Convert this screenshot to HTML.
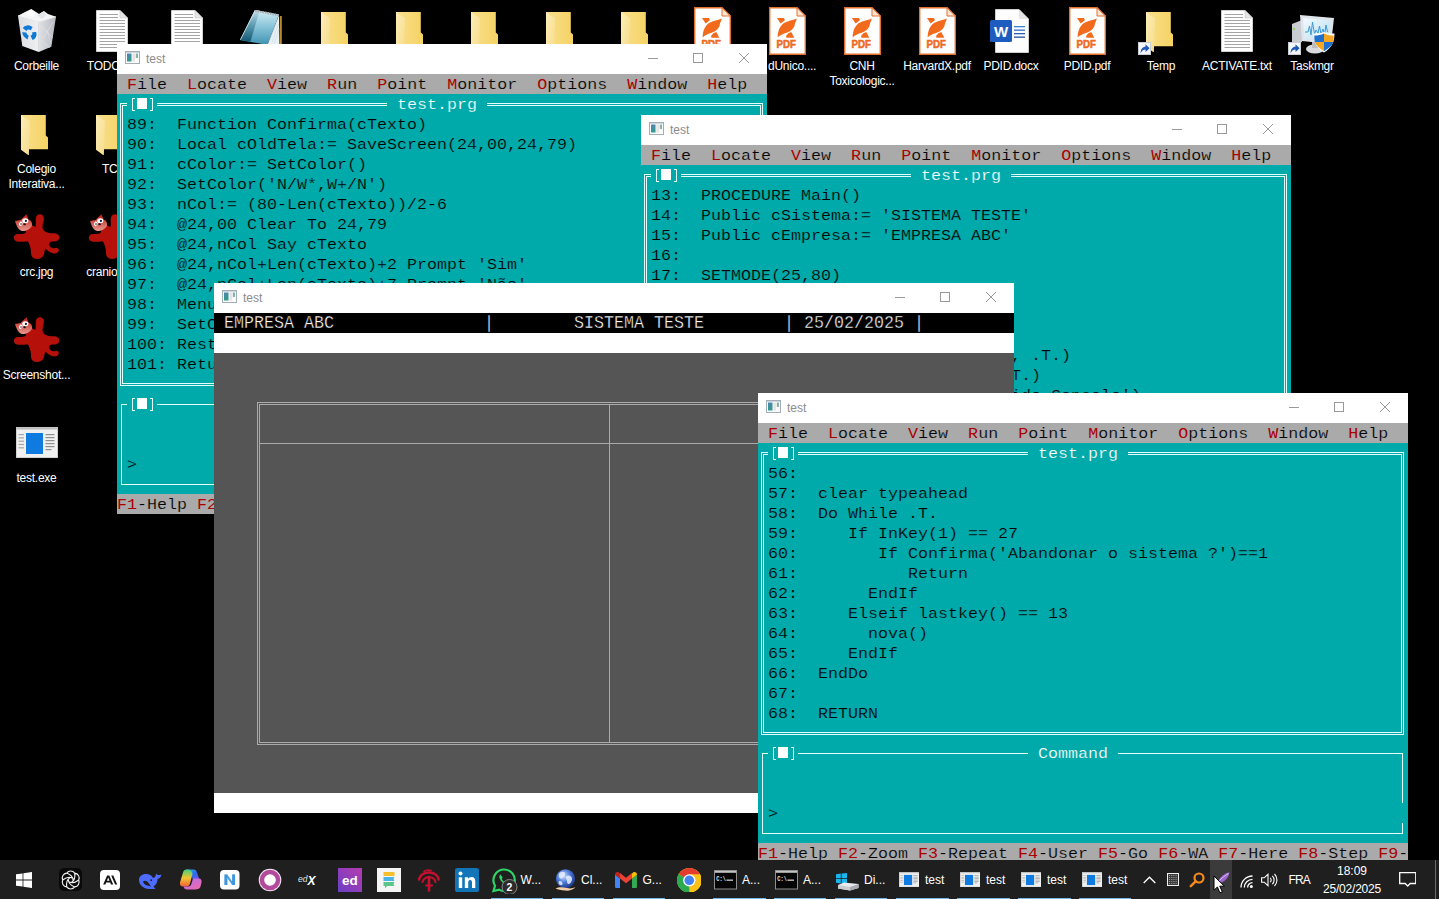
<!DOCTYPE html><html><head><meta charset="utf-8"><title>desktop</title><style>

*{box-sizing:border-box}
html,body{margin:0;padding:0}
body{width:1439px;height:899px;background:#000;position:relative;overflow:hidden;font-family:"Liberation Sans",sans-serif}
.win{position:absolute;background:#fff;overflow:hidden}
.tb{position:absolute;left:0;top:0;right:0;height:30px;background:#fff}
.tb .ti{position:absolute;left:29px;top:8px;font-size:12px;line-height:14px;color:#8c8c8c}
.tb svg.ic{position:absolute;left:8px;top:7px}
.tb svg.cb{position:absolute;top:0;right:0}
.con{position:absolute;left:0;top:30px;right:0;bottom:0;background:#00aaaa;overflow:hidden}
.r{position:absolute;left:0;height:20px;line-height:20px;white-space:pre;font-family:"Liberation Mono",monospace;font-size:15.5px;color:#000;transform:scaleX(1.07527);transform-origin:0 0;width:605px;padding-top:1px}
.r{-webkit-text-stroke:.22px #00aaaa}
.r.g{-webkit-text-stroke-color:#aaaaaa}
.r i{font-style:normal;color:#aa0000;-webkit-text-stroke:0}
.r.w{color:#fff}
.g{background:#aaaaaa}
.l{position:absolute;background:#e4ffff}
.c3 .r{-webkit-text-stroke:.4px #000;font-size:19px;transform:scaleX(.877);width:914px;color:#fff;padding-top:0}
.c3 .l{background:#aaaaaa}
.lb{position:absolute;text-align:center;color:#fff;font-size:12px;line-height:15px;letter-spacing:-.25px;white-space:nowrap;text-shadow:0 1px 1px #000}
.tl{position:absolute;top:13px;color:#fff;font-size:12px;line-height:14px;white-space:nowrap}
.ck{position:absolute;width:80px;text-align:center;color:#fff;font-size:12px;line-height:14px;white-space:nowrap}

</style></head><body>
<svg width="0" height="0" style="position:absolute"><defs>
<linearGradient id="gF" x1="0" y1="0" x2="1" y2="0"><stop offset="0" stop-color="#f9e08e"/><stop offset="1" stop-color="#f5d263"/></linearGradient>
<linearGradient id="gFl" x1="0" y1="0" x2="1" y2="1"><stop offset="0" stop-color="#fdeeb5"/><stop offset="1" stop-color="#f6dc8c"/></linearGradient>
<linearGradient id="gBin" x1="0" y1="0" x2="1" y2="0"><stop offset="0" stop-color="#dcdee2"/><stop offset="1" stop-color="#eff0f2"/></linearGradient>
<linearGradient id="gNp" x1="0" y1="0" x2="0" y2="1"><stop offset="0" stop-color="#d6edf5"/><stop offset=".45" stop-color="#8cc6da"/><stop offset="1" stop-color="#3f93b2"/></linearGradient>
<linearGradient id="gNp2" x1="0" y1="0" x2="0" y2="1"><stop offset="0" stop-color="#c4e0ea"/><stop offset=".4" stop-color="#6aa6bc"/><stop offset="1" stop-color="#135873"/></linearGradient>
<linearGradient id="gBin2" x1="0" y1="0" x2="1" y2="0"><stop offset="0" stop-color="#dfe1e5"/><stop offset="1" stop-color="#b4b8be"/></linearGradient>
<linearGradient id="gEd" x1="0" y1="1" x2="1" y2="0"><stop offset="0" stop-color="#6b3fc4"/><stop offset="1" stop-color="#b63bb0"/></linearGradient>
<linearGradient id="gCp1" x1="0" y1="0" x2="1" y2="1"><stop offset="0" stop-color="#2fb8e8"/><stop offset=".5" stop-color="#2a6df0"/><stop offset="1" stop-color="#7a4ff0"/></linearGradient>
<linearGradient id="gCp2" x1="0" y1="0" x2="0" y2="1"><stop offset="0" stop-color="#3fd07a"/><stop offset=".5" stop-color="#f3c530"/><stop offset="1" stop-color="#f0603a"/></linearGradient>
<linearGradient id="gCp3" x1="0" y1="0" x2="1" y2="1"><stop offset="0" stop-color="#b36cf0"/><stop offset="1" stop-color="#f06aa8"/></linearGradient>
<radialGradient id="gGl" cx=".4" cy=".35" r=".7"><stop offset="0" stop-color="#cfe0ff"/><stop offset=".5" stop-color="#4a78d8"/><stop offset="1" stop-color="#16307e"/></radialGradient>
<linearGradient id="gHead" x1="0" y1="0" x2="0" y2="1"><stop offset="0" stop-color="#c01810"/><stop offset="1" stop-color="#e89a90"/></linearGradient>
<linearGradient id="gAi" x1="0" y1="0" x2="0" y2="1"><stop offset="0" stop-color="#4f86b0"/><stop offset="1" stop-color="#2e9c8a"/></linearGradient>
<linearGradient id="gMon" x1="0" y1="0" x2="1" y2="1"><stop offset="0" stop-color="#f4fbff"/><stop offset="1" stop-color="#b8dcf0"/></linearGradient>
</defs></svg><svg style="position:absolute;left:17px;top:8px" width="40" height="45" viewBox="0 0 40 45" ><path d="M1 7.700L21.700 14V44L5.300 38z" fill="url(#gBin)"/><path d="M21.700 14L39 8.700L34.300 38.700L21.700 44z" fill="url(#gBin2)"/><path d="M1 7.700L8 4L14.300 1L19 4L22 6L27 3L31 6L39 8.700L21.700 14z" fill="#f4f5f7"/><path d="M9 6L14.300 1.500L18 5L16 9z" fill="#ffffff"/><path d="M20 7.500L26.500 3.200L29.500 7L25 11z" fill="#e4e6ea"/><path d="M1 7.700L21.700 14L39 8.700" fill="none" stroke="#ffffff" stroke-width=".8" opacity=".9"/><path d="M21.700 14V44" stroke="#f6f7f8" stroke-width=".7"/><path d="M24 18L36 30M36 14L26 30M30 22L34 36M24 32L33 40" stroke="#e9ebee" stroke-width=".7" opacity=".7"/><g transform="translate(12.300 24.700) skewY(12)" fill="none" stroke="#0f7ad6" stroke-width="4.200"><path d="M-4.700 -2.200A5.500 5.500 0 0 1 2.400 -4.600"/><path d="M4.900 -1.700A5.500 5.500 0 0 1 2.200 4.700"/><path d="M-1.200 5.100A5.500 5.500 0 0 1 -5.100 .800"/></g></svg><div class="lb" style="left:-8.5px;top:59px;width:90px">Corbeille</div><svg style="position:absolute;left:96px;top:10px" width="32" height="42" viewBox="0 0 32 42" ><path d="M0.5 0.5H24L31.5 8V41.5H0.5z" fill="#fff" stroke="#d0d0d0"/><path d="M24 0.5V8H31.5z" fill="#e6e6e6" stroke="#c8c8c8" stroke-width=".6"/><rect x="3.5" y="4" width="18.5" height="1" fill="#a4a4a4"/><rect x="3.5" y="7" width="18.5" height="1" fill="#a4a4a4"/><rect x="3.5" y="10" width="25.5" height="1" fill="#a4a4a4"/><rect x="3.5" y="13" width="25.5" height="1" fill="#a4a4a4"/><rect x="3.5" y="16" width="25.5" height="1" fill="#a4a4a4"/><rect x="3.5" y="19" width="25.5" height="1" fill="#a4a4a4"/><rect x="3.5" y="22" width="25.5" height="1" fill="#a4a4a4"/><rect x="3.5" y="25" width="25.5" height="1" fill="#a4a4a4"/><rect x="3.5" y="28" width="25.5" height="1" fill="#a4a4a4"/><rect x="3.5" y="31" width="25.5" height="1" fill="#a4a4a4"/><rect x="3.5" y="34" width="25.5" height="1" fill="#a4a4a4"/><rect x="3.5" y="37" width="25.5" height="1" fill="#a4a4a4"/></svg><div class="lb" style="left:66.0px;top:59px;width:90px">TODO.txt</div><svg style="position:absolute;left:171px;top:10px" width="32" height="42" viewBox="0 0 32 42" ><path d="M0.5 0.5H24L31.5 8V41.5H0.5z" fill="#fff" stroke="#d0d0d0"/><path d="M24 0.5V8H31.5z" fill="#e6e6e6" stroke="#c8c8c8" stroke-width=".6"/><rect x="3.5" y="4" width="18.5" height="1" fill="#a4a4a4"/><rect x="3.5" y="7" width="18.5" height="1" fill="#a4a4a4"/><rect x="3.5" y="10" width="25.5" height="1" fill="#a4a4a4"/><rect x="3.5" y="13" width="25.5" height="1" fill="#a4a4a4"/><rect x="3.5" y="16" width="25.5" height="1" fill="#a4a4a4"/><rect x="3.5" y="19" width="25.5" height="1" fill="#a4a4a4"/><rect x="3.5" y="22" width="25.5" height="1" fill="#a4a4a4"/><rect x="3.5" y="25" width="25.5" height="1" fill="#a4a4a4"/><rect x="3.5" y="28" width="25.5" height="1" fill="#a4a4a4"/><rect x="3.5" y="31" width="25.5" height="1" fill="#a4a4a4"/><rect x="3.5" y="34" width="25.5" height="1" fill="#a4a4a4"/><rect x="3.5" y="37" width="25.5" height="1" fill="#a4a4a4"/></svg><svg style="position:absolute;left:239px;top:10px" width="44" height="36" viewBox="0 0 44 36" ><path d="M16 0L40 4.500L28.500 35L1 30z" fill="url(#gNp)"/><path d="M16 0L20.500 .800L11.500 31.500L1 30z" fill="url(#gNp2)"/><path d="M16.300 .300L1.400 29.800" stroke="#e8f4f8" stroke-width=".9" opacity=".8"/><path d="M40 5L40.500 36H28L28.500 35z" fill="#e9f1f5"/><path d="M38.500 10L31 30M39.500 14L33 32M40 19L35 34" stroke="#c8d6de" stroke-width=".6"/><path d="M16.200 .800L40 5.300" stroke="#a9aeb2" stroke-width="2.200" stroke-dasharray="1.600 .900"/><path d="M40.800 6H42.800V36H40.800z" fill="#b98a2e"/></svg><svg style="position:absolute;left:321px;top:12px" width="27" height="40" viewBox="0 0 27 40" ><path d="M0 0H24.8V20.500L27 22.500V34.200H0z" fill="url(#gF)"/><path d="M0 0L9 6.200L7.800 40.500L0 34.800z" fill="url(#gFl)"/></svg><svg style="position:absolute;left:396px;top:12px" width="27" height="40" viewBox="0 0 27 40" ><path d="M0 0H24.8V20.500L27 22.500V34.200H0z" fill="url(#gF)"/><path d="M0 0L9 6.200L7.800 40.500L0 34.800z" fill="url(#gFl)"/></svg><svg style="position:absolute;left:471px;top:12px" width="27" height="40" viewBox="0 0 27 40" ><path d="M0 0H24.8V20.500L27 22.500V34.200H0z" fill="url(#gF)"/><path d="M0 0L9 6.200L7.800 40.500L0 34.800z" fill="url(#gFl)"/></svg><svg style="position:absolute;left:546px;top:12px" width="27" height="40" viewBox="0 0 27 40" ><path d="M0 0H24.8V20.500L27 22.500V34.200H0z" fill="url(#gF)"/><path d="M0 0L9 6.200L7.800 40.500L0 34.800z" fill="url(#gFl)"/></svg><svg style="position:absolute;left:621px;top:12px" width="27" height="40" viewBox="0 0 27 40" ><path d="M0 0H24.8V20.500L27 22.500V34.200H0z" fill="url(#gF)"/><path d="M0 0L9 6.200L7.800 40.500L0 34.800z" fill="url(#gFl)"/></svg><svg style="position:absolute;left:694px;top:7px" width="37" height="48" viewBox="0 0 37 48" ><path d="M.700 .700H28L36.300 9V47.300H.700z" fill="#fff" stroke="#e2702c" stroke-width="1.400"/><path d="M28 .700V9H36.300z" fill="#fbe6d6" stroke="#e2702c" stroke-width="1"/><path d="M8.700 30.500C8.700 24 11 18 16 15.500C20 13.500 25 13 27.700 11.500C27.500 14 26 15.500 25.800 17.500C25.500 21 22 24.500 17 26C13.500 27 10.500 28.500 8.700 30.500z" fill="#f26a1b"/><path d="M8 11.100H15L15.900 13.300L11.600 16.600z" fill="#f26a1b"/><path d="M19.300 26.300L22.300 25L25.300 30.800H17.600L17 29z" fill="#f26a1b"/><text x="7.600" y="40.800" font-family="Liberation Sans,sans-serif" font-weight="700" font-size="10.600" fill="#ee6a1f" stroke="#ee6a1f" stroke-width=".55" textLength="19.400" lengthAdjust="spacingAndGlyphs">PDF</text></svg><svg style="position:absolute;left:769px;top:7px" width="37" height="48" viewBox="0 0 37 48" ><path d="M.700 .700H28L36.300 9V47.300H.700z" fill="#fff" stroke="#e2702c" stroke-width="1.400"/><path d="M28 .700V9H36.300z" fill="#fbe6d6" stroke="#e2702c" stroke-width="1"/><path d="M8.700 30.500C8.700 24 11 18 16 15.500C20 13.500 25 13 27.700 11.500C27.500 14 26 15.500 25.800 17.500C25.500 21 22 24.500 17 26C13.500 27 10.500 28.500 8.700 30.500z" fill="#f26a1b"/><path d="M8 11.100H15L15.900 13.300L11.600 16.600z" fill="#f26a1b"/><path d="M19.300 26.300L22.300 25L25.300 30.800H17.600L17 29z" fill="#f26a1b"/><text x="7.600" y="40.800" font-family="Liberation Sans,sans-serif" font-weight="700" font-size="10.600" fill="#ee6a1f" stroke="#ee6a1f" stroke-width=".55" textLength="19.400" lengthAdjust="spacingAndGlyphs">PDF</text></svg><svg style="position:absolute;left:844px;top:7px" width="37" height="48" viewBox="0 0 37 48" ><path d="M.700 .700H28L36.300 9V47.300H.700z" fill="#fff" stroke="#e2702c" stroke-width="1.400"/><path d="M28 .700V9H36.300z" fill="#fbe6d6" stroke="#e2702c" stroke-width="1"/><path d="M8.700 30.500C8.700 24 11 18 16 15.500C20 13.500 25 13 27.700 11.500C27.500 14 26 15.500 25.800 17.500C25.500 21 22 24.500 17 26C13.500 27 10.500 28.500 8.700 30.500z" fill="#f26a1b"/><path d="M8 11.100H15L15.900 13.300L11.600 16.600z" fill="#f26a1b"/><path d="M19.300 26.300L22.300 25L25.300 30.800H17.600L17 29z" fill="#f26a1b"/><text x="7.600" y="40.800" font-family="Liberation Sans,sans-serif" font-weight="700" font-size="10.600" fill="#ee6a1f" stroke="#ee6a1f" stroke-width=".55" textLength="19.400" lengthAdjust="spacingAndGlyphs">PDF</text></svg><svg style="position:absolute;left:919px;top:7px" width="37" height="48" viewBox="0 0 37 48" ><path d="M.700 .700H28L36.300 9V47.300H.700z" fill="#fff" stroke="#e2702c" stroke-width="1.400"/><path d="M28 .700V9H36.300z" fill="#fbe6d6" stroke="#e2702c" stroke-width="1"/><path d="M8.700 30.500C8.700 24 11 18 16 15.500C20 13.500 25 13 27.700 11.500C27.500 14 26 15.500 25.800 17.500C25.500 21 22 24.500 17 26C13.500 27 10.500 28.500 8.700 30.500z" fill="#f26a1b"/><path d="M8 11.100H15L15.900 13.300L11.600 16.600z" fill="#f26a1b"/><path d="M19.300 26.300L22.300 25L25.300 30.800H17.600L17 29z" fill="#f26a1b"/><text x="7.600" y="40.800" font-family="Liberation Sans,sans-serif" font-weight="700" font-size="10.600" fill="#ee6a1f" stroke="#ee6a1f" stroke-width=".55" textLength="19.400" lengthAdjust="spacingAndGlyphs">PDF</text></svg><svg style="position:absolute;left:1069px;top:7px" width="37" height="48" viewBox="0 0 37 48" ><path d="M.700 .700H28L36.300 9V47.300H.700z" fill="#fff" stroke="#e2702c" stroke-width="1.400"/><path d="M28 .700V9H36.300z" fill="#fbe6d6" stroke="#e2702c" stroke-width="1"/><path d="M8.700 30.500C8.700 24 11 18 16 15.500C20 13.500 25 13 27.700 11.500C27.500 14 26 15.500 25.800 17.500C25.500 21 22 24.500 17 26C13.500 27 10.500 28.500 8.700 30.500z" fill="#f26a1b"/><path d="M8 11.100H15L15.900 13.300L11.600 16.600z" fill="#f26a1b"/><path d="M19.300 26.300L22.300 25L25.300 30.800H17.600L17 29z" fill="#f26a1b"/><text x="7.600" y="40.800" font-family="Liberation Sans,sans-serif" font-weight="700" font-size="10.600" fill="#ee6a1f" stroke="#ee6a1f" stroke-width=".55" textLength="19.400" lengthAdjust="spacingAndGlyphs">PDF</text></svg><div class="lb" style="left:768px;top:59px;text-align:left">dUnico....</div><div class="lb" style="left:817.0px;top:59px;width:90px">CNH<br>Toxicologic...</div><div class="lb" style="left:892.0px;top:59px;width:90px">HarvardX.pdf</div><svg style="position:absolute;left:990px;top:9px" width="39" height="44" viewBox="0 0 39 44" ><path d="M5.500 0.5H29L38.500 10V43.500H5.500z" fill="#fdfdfd" stroke="#cfcfcf"/><path d="M29 .5V10H38.500z" fill="#e4e4e4"/><rect x="0" y="11" width="22" height="22" rx="1.500" fill="#1e5cc0"/><text x="11" y="28" font-family="Liberation Sans,sans-serif" font-weight="700" font-size="15" fill="#fff" text-anchor="middle">W</text><rect x="24" y="17" width="11" height="1.300" fill="#3c86d8"/><rect x="24" y="20.500" width="11" height="1.300" fill="#2f6fc8"/><rect x="24" y="24" width="11" height="1.300" fill="#2a5fb4"/><rect x="24" y="27.500" width="11" height="1.300" fill="#24509c"/></svg><div class="lb" style="left:966.0px;top:59px;width:90px">PDID.docx</div><div class="lb" style="left:1042.0px;top:59px;width:90px">PDID.pdf</div><svg style="position:absolute;left:1146px;top:12px" width="27" height="40" viewBox="0 0 27 40" ><path d="M0 0H24.8V20.500L27 22.500V34.200H0z" fill="url(#gF)"/><path d="M0 0L9 6.200L7.800 40.500L0 34.800z" fill="url(#gFl)"/></svg><svg style="position:absolute;left:1138px;top:42px" width="13" height="13" viewBox="0 0 13 13" ><rect x=".5" y=".5" width="12" height="12" fill="#f4f6fa" stroke="#c9ced6"/><path d="M2.600 11.500C2.600 7 4.600 4.800 7.500 4.800V2.300L11.600 6.200L7.500 10V7.600C5.500 7.600 4 8.600 2.600 11.500z" fill="#1f58b8"/></svg><div class="lb" style="left:1116.0px;top:59px;width:90px">Temp</div><svg style="position:absolute;left:1221px;top:10px" width="32" height="42" viewBox="0 0 32 42" ><path d="M0.5 0.5H24L31.5 8V41.5H0.5z" fill="#fff" stroke="#d0d0d0"/><path d="M24 0.5V8H31.5z" fill="#e6e6e6" stroke="#c8c8c8" stroke-width=".6"/><rect x="3.5" y="4" width="18.5" height="1" fill="#a4a4a4"/><rect x="3.5" y="7" width="18.5" height="1" fill="#a4a4a4"/><rect x="3.5" y="10" width="25.5" height="1" fill="#a4a4a4"/><rect x="3.5" y="13" width="25.5" height="1" fill="#a4a4a4"/><rect x="3.5" y="16" width="25.5" height="1" fill="#a4a4a4"/><rect x="3.5" y="19" width="25.5" height="1" fill="#a4a4a4"/><rect x="3.5" y="22" width="25.5" height="1" fill="#a4a4a4"/><rect x="3.5" y="25" width="25.5" height="1" fill="#a4a4a4"/><rect x="3.5" y="28" width="25.5" height="1" fill="#a4a4a4"/><rect x="3.5" y="31" width="25.5" height="1" fill="#a4a4a4"/><rect x="3.5" y="34" width="25.5" height="1" fill="#a4a4a4"/><rect x="3.5" y="37" width="25.5" height="1" fill="#a4a4a4"/></svg><div class="lb" style="left:1192.0px;top:59px;width:90px">ACTIVATE.txt</div><svg style="position:absolute;left:1288px;top:12px" width="47" height="43" viewBox="0 0 47 43" ><path d="M4 12L14 8V30L4 33z" fill="#c9cdd2"/><circle cx="6" cy="17" r="1" fill="#7ed321"/><path d="M12 3L46 6L43 32L14 29z" fill="#dfe5ea"/><path d="M15 6L43 8.500L40.500 29L16.500 26.500z" fill="url(#gMon)"/><path d="M17 20h3l1.500-6 1.500 9 1.500-13 2 12 1.500-4 2 3 1.500-7 1.500 8 2-5 1.500 6 1.500-10 1.500 7" fill="none" stroke="#3a9ad8" stroke-width="1"/><ellipse cx="27" cy="37" rx="9" ry="4.500" fill="#d8dadd"/><path d="M24 30h6v6h-6z" fill="#b9bdc2"/><path d="M36 20c3.500 1.500 7 1.800 10.500 1.500 0 9-3.500 15-10.500 19-7-4-10.500-10-10.500-19 3.500.3 7 0 10.500-1.500z" fill="#fff"/><path d="M36 21.500V30h-9.300c-.3-2-.4-4.200-.4-6.500 3.200.1 6.500-.4 9.700-2z" fill="#1f6fd0"/><path d="M36 21.500c3.200 1.600 6.500 2.100 9.700 2 0 2.300-.1 4.500-.4 6.500H36z" fill="#f5a623"/><path d="M26.700 30H36v9.300c-5-3-8-6-9.300-9.300z" fill="#f5a623"/><path d="M36 30h9.300c-1.300 3.300-4.300 6.300-9.300 9.300z" fill="#1f6fd0"/></svg><svg style="position:absolute;left:1288px;top:42px" width="13" height="13" viewBox="0 0 13 13" ><rect x=".5" y=".5" width="12" height="12" fill="#f4f6fa" stroke="#c9ced6"/><path d="M2.600 11.500C2.600 7 4.600 4.800 7.500 4.800V2.300L11.600 6.200L7.500 10V7.600C5.500 7.600 4 8.600 2.600 11.500z" fill="#1f58b8"/></svg><div class="lb" style="left:1267.0px;top:59px;width:90px">Taskmgr</div><svg style="position:absolute;left:21px;top:115px" width="27" height="40" viewBox="0 0 27 40" ><path d="M0 0H24.8V20.500L27 22.500V34.200H0z" fill="url(#gF)"/><path d="M0 0L9 6.200L7.800 40.500L0 34.800z" fill="url(#gFl)"/></svg><div class="lb" style="left:-8.5px;top:162px;width:90px">Colegio<br>Interativa...</div><svg style="position:absolute;left:96px;top:115px" width="27" height="40" viewBox="0 0 27 40" ><path d="M0 0H24.8V20.500L27 22.500V34.200H0z" fill="url(#gF)"/><path d="M0 0L9 6.200L7.800 40.500L0 34.800z" fill="url(#gFl)"/></svg><div class="lb" style="left:66.0px;top:162px;width:90px">TCl</div><svg style="position:absolute;left:12px;top:212px" width="48" height="48" viewBox="0 0 48 48" ><path d="M28 2.200C31 2.200 32.500 5 31.800 8C31 11 30 14 31 17.500C33 20.500 37 21.500 41 21.200C45 21 47.500 23 47.400 25.500C47.300 28.500 44 29.800 41 29.500C38.500 29.300 36.500 31 37.500 33.500C38.500 36 41 36.500 43 36C45.500 35.300 47 36.500 46.800 38.500C46.500 41 43 42 40 41C37 40 35 38 33.500 36.500C32.500 38.500 32.500 40 32 42C31 45.500 28 47.200 24.500 47C21 46.800 19 44.500 19 41C19 37 18 33 16 29.500C13 29.500 9 30 6 29.700C3.500 29.500 1.900 28 1.900 25.800C1.900 23.500 3.500 22 6 22C9 22 12 22 13.500 21C14.500 19 14 17 15 15C17 13 21 13 23.500 15C24 12 23.500 9 23.800 6.500C24 4 25.500 2.200 28 2.200z" fill="#b5100a"/><path d="M3 9L8.500 8L14.400 2.200L16.500 7.500C19.500 8.500 20.500 11 20 14C18 17.500 13 19.500 10 19C6.500 18 4.500 14 3 9z" fill="url(#gHead)"/><ellipse cx="13.300" cy="8.700" rx="3.100" ry="2.500" fill="#fff"/><circle cx="13.900" cy="8.900" r="1.100" fill="#1a1a30"/><ellipse cx="8.800" cy="11.700" rx="1.700" ry="2.200" transform="rotate(25 8.800 11.700)" fill="#fff"/><circle cx="9" cy="12" r=".8" fill="#1a1a30"/><ellipse cx="12.600" cy="12.300" rx="1.300" ry="1" fill="#141414"/></svg><div class="lb" style="left:-8.5px;top:265px;width:90px">crc.jpg</div><svg style="position:absolute;left:87px;top:212px" width="48" height="48" viewBox="0 0 48 48" ><path d="M28 2.200C31 2.200 32.500 5 31.800 8C31 11 30 14 31 17.500C33 20.500 37 21.500 41 21.200C45 21 47.500 23 47.400 25.500C47.300 28.500 44 29.800 41 29.500C38.500 29.300 36.500 31 37.500 33.500C38.500 36 41 36.500 43 36C45.500 35.300 47 36.500 46.800 38.500C46.500 41 43 42 40 41C37 40 35 38 33.500 36.500C32.500 38.500 32.500 40 32 42C31 45.500 28 47.200 24.500 47C21 46.800 19 44.500 19 41C19 37 18 33 16 29.500C13 29.500 9 30 6 29.700C3.500 29.500 1.900 28 1.900 25.800C1.900 23.500 3.500 22 6 22C9 22 12 22 13.500 21C14.500 19 14 17 15 15C17 13 21 13 23.500 15C24 12 23.500 9 23.800 6.500C24 4 25.500 2.200 28 2.200z" fill="#b5100a"/><path d="M3 9L8.500 8L14.400 2.200L16.500 7.500C19.500 8.500 20.500 11 20 14C18 17.500 13 19.500 10 19C6.500 18 4.500 14 3 9z" fill="url(#gHead)"/><ellipse cx="13.300" cy="8.700" rx="3.100" ry="2.500" fill="#fff"/><circle cx="13.900" cy="8.900" r="1.100" fill="#1a1a30"/><ellipse cx="8.800" cy="11.700" rx="1.700" ry="2.200" transform="rotate(25 8.800 11.700)" fill="#fff"/><circle cx="9" cy="12" r=".8" fill="#1a1a30"/><ellipse cx="12.600" cy="12.300" rx="1.300" ry="1" fill="#141414"/></svg><div class="lb" style="left:66.0px;top:265px;width:90px">cranio.jpg</div><svg style="position:absolute;left:12px;top:315px" width="48" height="48" viewBox="0 0 48 48" ><path d="M28 2.200C31 2.200 32.500 5 31.800 8C31 11 30 14 31 17.500C33 20.500 37 21.500 41 21.200C45 21 47.500 23 47.400 25.500C47.300 28.500 44 29.800 41 29.500C38.500 29.300 36.500 31 37.500 33.500C38.500 36 41 36.500 43 36C45.500 35.300 47 36.500 46.800 38.500C46.500 41 43 42 40 41C37 40 35 38 33.500 36.500C32.500 38.500 32.500 40 32 42C31 45.500 28 47.200 24.500 47C21 46.800 19 44.500 19 41C19 37 18 33 16 29.500C13 29.500 9 30 6 29.700C3.500 29.500 1.900 28 1.900 25.800C1.900 23.500 3.500 22 6 22C9 22 12 22 13.500 21C14.500 19 14 17 15 15C17 13 21 13 23.500 15C24 12 23.500 9 23.800 6.500C24 4 25.500 2.200 28 2.200z" fill="#b5100a"/><path d="M3 9L8.500 8L14.400 2.200L16.500 7.500C19.500 8.500 20.500 11 20 14C18 17.500 13 19.500 10 19C6.500 18 4.500 14 3 9z" fill="url(#gHead)"/><ellipse cx="13.300" cy="8.700" rx="3.100" ry="2.500" fill="#fff"/><circle cx="13.900" cy="8.900" r="1.100" fill="#1a1a30"/><ellipse cx="8.800" cy="11.700" rx="1.700" ry="2.200" transform="rotate(25 8.800 11.700)" fill="#fff"/><circle cx="9" cy="12" r=".8" fill="#1a1a30"/><ellipse cx="12.600" cy="12.300" rx="1.300" ry="1" fill="#141414"/></svg><div class="lb" style="left:-8.5px;top:368px;width:90px">Screenshot...</div><svg style="position:absolute;left:16px;top:427px" width="42" height="31" viewBox="0 0 42 31" ><rect x="0" y="0" width="42" height="31" fill="#f0f0f0"/><rect x="0" y="0" width="42" height="2.500" fill="#bdbdbd"/><rect x="0.400" y="0.400" width="41.200" height="30.200" fill="none" stroke="#c8c8c8" stroke-width=".8"/><rect x="10" y="6" width="17" height="21" fill="#0f7ae0"/><rect x="29.500" y="7" width="9" height="1.200" fill="#8e8e8e"/><rect x="29.500" y="10" width="9" height="1.200" fill="#8e8e8e"/><rect x="29.500" y="13" width="9" height="1.200" fill="#8e8e8e"/><rect x="29.500" y="16" width="9" height="1.200" fill="#8e8e8e"/><rect x="29.500" y="19" width="9" height="1.200" fill="#8e8e8e"/><rect x="29.500" y="22" width="6" height="1.200" fill="#8e8e8e"/><rect x="2.500" y="7.0" width="5.500" height="1.200" fill="#a8a8a8"/><rect x="2.500" y="10.3" width="5.500" height="1.200" fill="#a8a8a8"/><rect x="2.500" y="13.6" width="5.500" height="1.200" fill="#a8a8a8"/><rect x="2.500" y="16.9" width="5.500" height="1.200" fill="#a8a8a8"/><rect x="2.500" y="20.2" width="5.500" height="1.200" fill="#a8a8a8"/></svg><div class="lb" style="left:-8.5px;top:471px;width:90px">test.exe</div>
<div class="win" style="left:117px;top:44px;width:650px;height:470px;z-index:1"><div class="tb"><svg class="ic" width="15" height="13" viewBox="0 0 15 13"><rect x="0.5" y="0.5" width="14" height="12" fill="#fbfbfb" stroke="#a3adb6"/><rect x="1" y="1" width="13" height="1" fill="#cfd8de"/><rect x="2" y="2.5" width="4.500" height="8" fill="url(#gAi)"/><rect x="7.300" y="2.500" width="2.700" height="8" fill="#e9e4e4"/><rect x="10.800" y="2.500" width="2.200" height="4.500" fill="#86b3aa"/></svg><div class="ti">test</div><svg class="cb" width="138" height="30" viewBox="0 0 138 30"><path d="M19 14.5h10" stroke="#999" stroke-width="1" fill="none"/><rect x="64.5" y="9.5" width="9" height="9" stroke="#999" stroke-width="1" fill="none"/><path d="M110 9l10 10M120 9l-10 10" stroke="#999" stroke-width="1" fill="none"/></svg></div><div class="con"><div class="r g" style="top:0"> <i>F</i>ile  <i>L</i>ocate  <i>V</i>iew  <i>R</i>un  <i>P</i>oint  <i>M</i>onitor  <i>O</i>ptions  <i>W</i>indow  <i>H</i>elp  </div><div class="l" style="left:40px;top:29px;width:230px;height:1px"></div><div class="l" style="left:40px;top:31px;width:230px;height:1px"></div><div class="l" style="left:3px;top:29px;width:7px;height:1px"></div><div class="l" style="left:5px;top:31px;width:5px;height:1px"></div><div class="l" style="left:370px;top:29px;width:276px;height:1px"></div><div class="l" style="left:370px;top:31px;width:274px;height:1px"></div><div class="l" style="left:3px;top:29px;width:1px;height:283px"></div><div class="l" style="left:5px;top:31px;width:1px;height:279px"></div><div class="l" style="left:645px;top:29px;width:1px;height:283px"></div><div class="l" style="left:643px;top:31px;width:1px;height:279px"></div><div class="l" style="left:5px;top:309px;width:639px;height:1px"></div><div class="l" style="left:3px;top:311px;width:643px;height:1px"></div><div class="l" style="left:15px;top:24px;width:1px;height:13px"></div><div class="l" style="left:15px;top:24px;width:3px;height:1px"></div><div class="l" style="left:15px;top:36px;width:3px;height:1px"></div><div class="l" style="left:20px;top:24px;width:10px;height:11px;background:#fff"></div><div class="l" style="left:35px;top:24px;width:1px;height:13px"></div><div class="l" style="left:33px;top:24px;width:3px;height:1px"></div><div class="l" style="left:33px;top:36px;width:3px;height:1px"></div><div class="r w" style="top:20px">                            test.prg</div><div class="r" style="top:40px"> 89:  Function Confirma(cTexto)</div><div class="r" style="top:60px"> 90:  Local cOldTela:= SaveScreen(24,00,24,79)</div><div class="r" style="top:80px"> 91:  cColor:= SetColor()</div><div class="r" style="top:100px"> 92:  SetColor('N/W*,W+/N')</div><div class="r" style="top:120px"> 93:  nCol:= (80-Len(cTexto))/2-6</div><div class="r" style="top:140px"> 94:  @24,00 Clear To 24,79</div><div class="r" style="top:160px"> 95:  @24,nCol Say cTexto</div><div class="r" style="top:180px"> 96:  @24,nCol+Len(cTexto)+2 Prompt 'Sim'</div><div class="r" style="top:200px"> 97:  @24,nCol+Len(cTexto)+7 Prompt 'Não'</div><div class="r" style="top:220px"> 98:  Menu To nOpc</div><div class="r" style="top:240px"> 99:  SetColor(cColor)</div><div class="r" style="top:260px"> 100: RestScreen(24,00,24,79,cOldTela)</div><div class="r" style="top:280px"> 101: Return nOpc</div><div class="l" style="left:4px;top:330px;width:6px;height:1px"></div><div class="l" style="left:40px;top:330px;width:230px;height:1px"></div><div class="l" style="left:360px;top:330px;width:285px;height:1px"></div><div class="l" style="left:4px;top:330px;width:1px;height:81px"></div><div class="l" style="left:644px;top:330px;width:1px;height:50px"></div><div class="l" style="left:644px;top:400px;width:1px;height:11px"></div><div class="l" style="left:4px;top:410px;width:641px;height:1px"></div><div class="l" style="left:15px;top:324px;width:1px;height:13px"></div><div class="l" style="left:15px;top:324px;width:3px;height:1px"></div><div class="l" style="left:15px;top:336px;width:3px;height:1px"></div><div class="l" style="left:20px;top:324px;width:10px;height:11px;background:#fff"></div><div class="l" style="left:35px;top:324px;width:1px;height:13px"></div><div class="l" style="left:33px;top:324px;width:3px;height:1px"></div><div class="l" style="left:33px;top:336px;width:3px;height:1px"></div><div class="r w" style="top:320px">                            Command</div><div class="r" style="top:380px"> &gt;</div><div class="r g" style="top:420px"><i>F1</i>-Help <i>F2</i>-Zoom <i>F3</i>-Repeat <i>F4</i>-User <i>F5</i>-Go <i>F6</i>-WA <i>F7</i>-Here <i>F8</i>-Step <i>F9</i>-</div></div></div>
<div class="win" style="left:641px;top:115px;width:650px;height:470px;z-index:2"><div class="tb"><svg class="ic" width="15" height="13" viewBox="0 0 15 13"><rect x="0.5" y="0.5" width="14" height="12" fill="#fbfbfb" stroke="#a3adb6"/><rect x="1" y="1" width="13" height="1" fill="#cfd8de"/><rect x="2" y="2.5" width="4.500" height="8" fill="url(#gAi)"/><rect x="7.300" y="2.500" width="2.700" height="8" fill="#e9e4e4"/><rect x="10.800" y="2.500" width="2.200" height="4.500" fill="#86b3aa"/></svg><div class="ti">test</div><svg class="cb" width="138" height="30" viewBox="0 0 138 30"><path d="M19 14.5h10" stroke="#999" stroke-width="1" fill="none"/><rect x="64.5" y="9.5" width="9" height="9" stroke="#999" stroke-width="1" fill="none"/><path d="M110 9l10 10M120 9l-10 10" stroke="#999" stroke-width="1" fill="none"/></svg></div><div class="con"><div class="r g" style="top:0"> <i>F</i>ile  <i>L</i>ocate  <i>V</i>iew  <i>R</i>un  <i>P</i>oint  <i>M</i>onitor  <i>O</i>ptions  <i>W</i>indow  <i>H</i>elp  </div><div class="l" style="left:40px;top:29px;width:230px;height:1px"></div><div class="l" style="left:40px;top:31px;width:230px;height:1px"></div><div class="l" style="left:3px;top:29px;width:7px;height:1px"></div><div class="l" style="left:5px;top:31px;width:5px;height:1px"></div><div class="l" style="left:370px;top:29px;width:276px;height:1px"></div><div class="l" style="left:370px;top:31px;width:274px;height:1px"></div><div class="l" style="left:3px;top:29px;width:1px;height:283px"></div><div class="l" style="left:5px;top:31px;width:1px;height:279px"></div><div class="l" style="left:645px;top:29px;width:1px;height:283px"></div><div class="l" style="left:643px;top:31px;width:1px;height:279px"></div><div class="l" style="left:5px;top:309px;width:639px;height:1px"></div><div class="l" style="left:3px;top:311px;width:643px;height:1px"></div><div class="l" style="left:15px;top:24px;width:1px;height:13px"></div><div class="l" style="left:15px;top:24px;width:3px;height:1px"></div><div class="l" style="left:15px;top:36px;width:3px;height:1px"></div><div class="l" style="left:20px;top:24px;width:10px;height:11px;background:#fff"></div><div class="l" style="left:35px;top:24px;width:1px;height:13px"></div><div class="l" style="left:33px;top:24px;width:3px;height:1px"></div><div class="l" style="left:33px;top:36px;width:3px;height:1px"></div><div class="r w" style="top:20px">                            test.prg</div><div class="r" style="top:40px"> 13:  PROCEDURE Main()</div><div class="r" style="top:60px"> 14:  Public cSistema:= 'SISTEMA TESTE'</div><div class="r" style="top:80px"> 15:  Public cEmpresa:= 'EMPRESA ABC'</div><div class="r" style="top:100px"> 16:</div><div class="r" style="top:120px"> 17:  SETMODE(25,80)</div><div class="r" style="top:140px"> 18:  SET DATE BRITISH</div><div class="r" style="top:160px"> 19:  SET CENTURY ON</div><div class="r" style="top:180px"> 20:  SetColor("W+/N+")</div><div class="r" style="top:200px"> 21:  hb_gtInfo( HB_GTI_CLOSABLE     , .T.)</div><div class="r" style="top:220px"> 22:  hb_gtInfo( HB_GTI_RESIZABLE,.  T.)</div><div class="r" style="top:240px"> 23:  hb_gtInfo( HB_GTI_WINTITLE,'H  ide Console')</div><div class="r" style="top:260px"> 24:</div><div class="r" style="top:280px"> 25:</div><div class="l" style="left:4px;top:330px;width:6px;height:1px"></div><div class="l" style="left:40px;top:330px;width:230px;height:1px"></div><div class="l" style="left:360px;top:330px;width:285px;height:1px"></div><div class="l" style="left:4px;top:330px;width:1px;height:81px"></div><div class="l" style="left:644px;top:330px;width:1px;height:50px"></div><div class="l" style="left:644px;top:400px;width:1px;height:11px"></div><div class="l" style="left:4px;top:410px;width:641px;height:1px"></div><div class="l" style="left:15px;top:324px;width:1px;height:13px"></div><div class="l" style="left:15px;top:324px;width:3px;height:1px"></div><div class="l" style="left:15px;top:336px;width:3px;height:1px"></div><div class="l" style="left:20px;top:324px;width:10px;height:11px;background:#fff"></div><div class="l" style="left:35px;top:324px;width:1px;height:13px"></div><div class="l" style="left:33px;top:324px;width:3px;height:1px"></div><div class="l" style="left:33px;top:336px;width:3px;height:1px"></div><div class="r w" style="top:320px">                            Command</div><div class="r" style="top:380px"> &gt;</div><div class="r g" style="top:420px"><i>F1</i>-Help <i>F2</i>-Zoom <i>F3</i>-Repeat <i>F4</i>-User <i>F5</i>-Go <i>F6</i>-WA <i>F7</i>-Here <i>F8</i>-Step <i>F9</i>-</div></div></div>
<div class="win" style="left:214px;top:283px;width:800px;height:530px;z-index:3"><div class="tb"><svg class="ic" width="15" height="13" viewBox="0 0 15 13"><rect x="0.5" y="0.5" width="14" height="12" fill="#fbfbfb" stroke="#a3adb6"/><rect x="1" y="1" width="13" height="1" fill="#cfd8de"/><rect x="2" y="2.5" width="4.500" height="8" fill="url(#gAi)"/><rect x="7.300" y="2.500" width="2.700" height="8" fill="#e9e4e4"/><rect x="10.800" y="2.500" width="2.200" height="4.500" fill="#86b3aa"/></svg><div class="ti">test</div><svg class="cb" width="138" height="30" viewBox="0 0 138 30"><path d="M19 14.5h10" stroke="#999" stroke-width="1" fill="none"/><rect x="64.5" y="9.5" width="9" height="9" stroke="#999" stroke-width="1" fill="none"/><path d="M110 9l10 10M120 9l-10 10" stroke="#999" stroke-width="1" fill="none"/></svg></div><div class="con c3" style="background:#555555"><div class="r" style="top:0;background:#000"> EMPRESA ABC               |        SISTEMA TESTE        | 25/02/2025 |         </div><div style="position:absolute;left:0;top:20px;width:800px;height:20px;background:#fff"></div><div style="position:absolute;left:0;top:480px;width:800px;height:20px;background:#fff"></div><div class="l" style="left:43px;top:89px;width:710px;height:1px"></div><div class="l" style="left:45px;top:91px;width:708px;height:1px"></div><div class="l" style="left:43px;top:89px;width:1px;height:343px"></div><div class="l" style="left:45px;top:91px;width:1px;height:339px"></div><div class="l" style="left:45px;top:429px;width:708px;height:1px"></div><div class="l" style="left:43px;top:431px;width:710px;height:1px"></div><div class="l" style="left:45px;top:130px;width:708px;height:1px"></div><div class="l" style="left:395px;top:91px;width:1px;height:338px"></div></div></div>
<div class="win" style="left:758px;top:393px;width:650px;height:470px;z-index:4"><div class="tb"><svg class="ic" width="15" height="13" viewBox="0 0 15 13"><rect x="0.5" y="0.5" width="14" height="12" fill="#fbfbfb" stroke="#a3adb6"/><rect x="1" y="1" width="13" height="1" fill="#cfd8de"/><rect x="2" y="2.5" width="4.500" height="8" fill="url(#gAi)"/><rect x="7.300" y="2.500" width="2.700" height="8" fill="#e9e4e4"/><rect x="10.800" y="2.500" width="2.200" height="4.500" fill="#86b3aa"/></svg><div class="ti">test</div><svg class="cb" width="138" height="30" viewBox="0 0 138 30"><path d="M19 14.5h10" stroke="#999" stroke-width="1" fill="none"/><rect x="64.5" y="9.5" width="9" height="9" stroke="#999" stroke-width="1" fill="none"/><path d="M110 9l10 10M120 9l-10 10" stroke="#999" stroke-width="1" fill="none"/></svg></div><div class="con"><div class="r g" style="top:0"> <i>F</i>ile  <i>L</i>ocate  <i>V</i>iew  <i>R</i>un  <i>P</i>oint  <i>M</i>onitor  <i>O</i>ptions  <i>W</i>indow  <i>H</i>elp  </div><div class="l" style="left:40px;top:29px;width:230px;height:1px"></div><div class="l" style="left:40px;top:31px;width:230px;height:1px"></div><div class="l" style="left:3px;top:29px;width:7px;height:1px"></div><div class="l" style="left:5px;top:31px;width:5px;height:1px"></div><div class="l" style="left:370px;top:29px;width:276px;height:1px"></div><div class="l" style="left:370px;top:31px;width:274px;height:1px"></div><div class="l" style="left:3px;top:29px;width:1px;height:283px"></div><div class="l" style="left:5px;top:31px;width:1px;height:279px"></div><div class="l" style="left:645px;top:29px;width:1px;height:283px"></div><div class="l" style="left:643px;top:31px;width:1px;height:279px"></div><div class="l" style="left:5px;top:309px;width:639px;height:1px"></div><div class="l" style="left:3px;top:311px;width:643px;height:1px"></div><div class="l" style="left:15px;top:24px;width:1px;height:13px"></div><div class="l" style="left:15px;top:24px;width:3px;height:1px"></div><div class="l" style="left:15px;top:36px;width:3px;height:1px"></div><div class="l" style="left:20px;top:24px;width:10px;height:11px;background:#fff"></div><div class="l" style="left:35px;top:24px;width:1px;height:13px"></div><div class="l" style="left:33px;top:24px;width:3px;height:1px"></div><div class="l" style="left:33px;top:36px;width:3px;height:1px"></div><div class="r w" style="top:20px">                            test.prg</div><div class="r" style="top:40px"> 56:</div><div class="r" style="top:60px"> 57:  clear typeahead</div><div class="r" style="top:80px"> 58:  Do While .T.</div><div class="r" style="top:100px"> 59:     If InKey(1) == 27</div><div class="r" style="top:120px"> 60:        If Confirma('Abandonar o sistema ?')==1</div><div class="r" style="top:140px"> 61:           Return</div><div class="r" style="top:160px"> 62:       EndIf</div><div class="r" style="top:180px"> 63:     Elseif lastkey() == 13</div><div class="r" style="top:200px"> 64:       nova()</div><div class="r" style="top:220px"> 65:     EndIf</div><div class="r" style="top:240px"> 66:  EndDo</div><div class="r" style="top:260px"> 67:</div><div class="r" style="top:280px"> 68:  RETURN</div><div class="l" style="left:4px;top:330px;width:6px;height:1px"></div><div class="l" style="left:40px;top:330px;width:230px;height:1px"></div><div class="l" style="left:360px;top:330px;width:285px;height:1px"></div><div class="l" style="left:4px;top:330px;width:1px;height:81px"></div><div class="l" style="left:644px;top:330px;width:1px;height:50px"></div><div class="l" style="left:644px;top:400px;width:1px;height:11px"></div><div class="l" style="left:4px;top:410px;width:641px;height:1px"></div><div class="l" style="left:15px;top:324px;width:1px;height:13px"></div><div class="l" style="left:15px;top:324px;width:3px;height:1px"></div><div class="l" style="left:15px;top:336px;width:3px;height:1px"></div><div class="l" style="left:20px;top:324px;width:10px;height:11px;background:#fff"></div><div class="l" style="left:35px;top:324px;width:1px;height:13px"></div><div class="l" style="left:33px;top:324px;width:3px;height:1px"></div><div class="l" style="left:33px;top:336px;width:3px;height:1px"></div><div class="r w" style="top:320px">                            Command</div><div class="r" style="top:380px"> &gt;</div><div class="r g" style="top:420px"><i>F1</i>-Help <i>F2</i>-Zoom <i>F3</i>-Repeat <i>F4</i>-User <i>F5</i>-Go <i>F6</i>-WA <i>F7</i>-Here <i>F8</i>-Step <i>F9</i>-</div></div></div>
<div id="tb" style="position:absolute;left:0;top:860px;width:1439px;height:39px;background:#1f1f1f;z-index:50;overflow:hidden"><svg style="position:absolute;left:16px;top:12px" width="16" height="16" viewBox="0 0 16 16" ><path d="M0 2.300L6.600 1.400V7.600H0zM7.400 1.300L16 0V7.600H7.400zM0 8.400H6.600V14.600L0 13.700zM7.400 8.400H16V16L7.400 14.700z" fill="#fff"/></svg><svg style="position:absolute;left:58.5px;top:8px" width="23" height="23" viewBox="0 0 23 23" ><rect width="23" height="23" rx="5" fill="#0a0a0a"/><path d="M7.7 5.07A4.9 4.9 0 0 1 15.7 5.07M7.7 5.07Q13.72 7.47 14.1 12.0M15.7 5.07A4.9 4.9 0 0 1 19.7 12.0M15.7 5.07Q16.63 11.48 12.9 14.08M19.7 12.0A4.9 4.9 0 0 1 15.7 18.93M19.7 12.0Q14.62 16.01 10.5 14.08M15.7 18.93A4.9 4.9 0 0 1 7.7 18.93M15.7 18.93Q9.68 16.53 9.3 12.0M7.7 18.93A4.9 4.9 0 0 1 3.7 12.0M7.7 18.93Q6.77 12.52 10.5 9.92M3.7 12.0A4.9 4.9 0 0 1 7.7 5.07M3.7 12.0Q8.78 7.99 12.9 9.92" fill="none" stroke="#f0f0f0" stroke-width="1.150" stroke-linecap="round"/></svg><svg style="position:absolute;left:100px;top:10px" width="20" height="20" viewBox="0 0 20 20" ><rect width="20" height="20" rx="4" fill="#fff"/><path d="M3.200 14.500L7.100 5.500H9.300L13.200 14.500H11L10.200 12.500H6.200L5.400 14.500zM6.900 10.800H9.500L8.200 7.500z" fill="#141414"/><path d="M11.200 5.500H13.300L17.200 14.500H15.100z" fill="#141414"/></svg><svg style="position:absolute;left:137.5px;top:11.5px" width="24.5" height="17.5" viewBox="0 0 24.5 17.5" ><path d="M1 8C1 4 4.500 1.500 9 2C12 2.300 14 4 15 6C17 5.500 18 4 18 1.500C19 3 20.500 3.500 23.500 2.500C23 5 21.500 6.500 19.500 7C19.500 11 17.500 13 15.500 14.500L17.500 17H13C7 17.500 1 14 1 8z" fill="#4d6bfe"/><path d="M5 9.500C7 8 9 9 10.500 11L13 14.500L9.500 13.500C7 13 5.500 11.500 5 9.500z" fill="#1f1f1f"/><circle cx="13.200" cy="8.200" r=".9" fill="#1f1f1f"/></svg><svg style="position:absolute;left:177.5px;top:8px" width="24.5" height="23" viewBox="0 0 24.5 23" ><path d="M8 1.500H15.500C17.500 1.500 18.500 2.800 19 4.500L21.500 12H15L12.500 4.500C12 3 11 2.500 9.500 2.500z" fill="url(#gCp1)"/><path d="M8.500 1.500C6.500 1.500 5.500 2.800 5 4.500L2 14.500C1.500 17 3 18.500 5 18.500H8.500C10.500 18.500 11.500 17.500 12 15.500L14.500 6C14 3 12.500 1.500 8.500 1.500z" fill="url(#gCp2)"/><path d="M16 21.500H9C7 21.500 6 20.200 5.500 18.500H10C12 18.500 13 17.500 13.500 15.500L15 10.500H21C23 10.500 24 12.500 23.500 14.500L22.500 18.500C22 20.500 20.500 21.500 16 21.500z" fill="url(#gCp3)"/></svg><svg style="position:absolute;left:220.3px;top:10.299999999999955px" width="19.5" height="19.5" viewBox="0 0 19.5 19.5" ><rect width="19.500" height="19.500" rx="4" fill="#fdfdfd"/><path d="M4.500 4.500H7.300L12.200 11.500V4.500H15V15H12.200L7.300 8V15H4.500z" fill="#4aa0e6"/><path d="M4.500 4.500H7.300V15H4.500zM12.200 4.500H15V15H12.200z" fill="#3a8fd8" opacity=".6"/></svg><svg style="position:absolute;left:258px;top:7.5px" width="24" height="24" viewBox="0 0 24 24" ><circle cx="12" cy="12" r="11.300" fill="#f4e6f1"/><circle cx="12" cy="12" r="10.300" fill="#b24a9c"/><circle cx="12" cy="12" r="5.800" fill="#fff"/></svg><svg style="position:absolute;left:298px;top:13px" width="24" height="14" viewBox="0 0 24 14" ><text x="0" y="9" font-family="Liberation Sans,sans-serif" font-style="italic" font-size="8.500" fill="#d8ecec">ed</text><text x="9.500" y="12" font-family="Liberation Sans,sans-serif" font-style="italic" font-weight="700" font-size="12" fill="#fff">X</text></svg><svg style="position:absolute;left:338px;top:7.7000000000000455px" width="24" height="24.3" viewBox="0 0 24 24.3" ><rect width="24" height="24.300" fill="url(#gEd)"/><text x="12" y="17.500" font-family="Liberation Sans,sans-serif" font-weight="700" font-size="13.500" fill="#fff" text-anchor="middle">ed</text></svg><svg style="position:absolute;left:376.7px;top:7.7000000000000455px" width="24.3" height="24.3" viewBox="0 0 24.3 24.3" ><rect width="24.300" height="24.300" fill="#f5f5f5"/><path d="M6.500 4H17.500V8H6.500z" fill="#f5c02c"/><path d="M6.500 9H17.500L16.500 11L17.500 13H6.500z" fill="#4ab4e6"/><path d="M6.500 14H17.500L16.500 16L17.500 18H10L8 20.500V18H6.500z" fill="#5cc58a"/></svg><svg style="position:absolute;left:416.7px;top:8.700000000000045px" width="23" height="23" viewBox="0 0 23 23" ><g fill="none" stroke="#c8102e" stroke-linecap="round"><path d="M2 10.500C3 5.500 8 3 13 3.500C18 4 21.500 7 21.500 10.500" stroke-width="2.400"/><path d="M5.500 13C6.500 9.500 9.500 8 12.500 8.200C15.500 8.400 18 10 18.500 13" stroke-width="2"/><path d="M12 8V21.500" stroke-width="2.600"/><path d="M7 2.500C9 1 12 .8 14 1.500" stroke-width="1.600"/><path d="M9 16.500H15" stroke-width="2"/></g></svg><svg style="position:absolute;left:454.7px;top:7.7000000000000455px" width="24" height="24.3" viewBox="0 0 24 24.3" ><rect width="24" height="24.300" rx="2.500" fill="#1275b8"/><rect x="3.800" y="9.300" width="3.400" height="10.700" fill="#fff"/><circle cx="5.500" cy="5.600" r="2" fill="#fff"/><path d="M9.800 9.300H13V10.800C13.700 9.700 14.900 9 16.500 9C19.300 9 20.300 10.800 20.300 13.800V20H17V14.500C17 13 16.500 12 15.200 12C13.900 12 13.200 12.900 13.200 14.500V20H9.800z" fill="#fff"/></svg><svg style="position:absolute;left:491.7px;top:7.7000000000000455px" width="26" height="26" viewBox="0 0 26 26" ><path d="M12.200 1.500A10.700 10.700 0 0 0 3 17.700L1.500 23L7 21.600A10.700 10.700 0 1 0 12.200 1.500z" fill="none" stroke="#2fd366" stroke-width="2.200"/><path d="M8.500 6.500C7.500 7 7 8.500 7.500 10C8.500 13 11 15.500 14 16.500C15.500 17 17 16.500 17.500 15.500L15 13.800L13.800 14.800C12 14 10.500 12.500 9.700 10.700L10.700 9.500z" fill="#2fd366"/><circle cx="17.500" cy="19" r="7.500" fill="#2b2b2b" stroke="#8a8a8a" stroke-width="1"/><text x="17.500" y="23" font-family="Liberation Sans,sans-serif" font-weight="700" font-size="10.500" fill="#fff" text-anchor="middle">2</text></svg><div class="tl" style="left:520.5px">W...</div><div style="position:absolute;left:491px;top:38px;width:52px;height:2px;background:#76b9ed"></div><svg style="position:absolute;left:555px;top:8.700000000000045px" width="21" height="22" viewBox="0 0 21 22" ><circle cx="10.500" cy="9.800" r="9.600" fill="url(#gGl)"/><path d="M5 3.500C7.500 2 10.500 2.500 10 5C9.500 7.500 8 7 7.500 9C7 10.500 5 9.500 4 8C3.500 6 4 4.500 5 3.500zM11.500 7C14 5.500 17 7 17 10C17 12.500 15 15.500 13 15C11.500 14 12.500 12 11.500 10.500C10.500 9 10.500 8 11.500 7zM4 12C6 11.500 8 13 7.500 15.500C6.500 17 4.500 16 3.500 14.500z" fill="#e6efff" opacity=".85"/><path d="M.500 19.500C4 17.500 8 18 12 19C15 19.800 17.500 19.500 20.500 18.300C18 21 14 22 10 21.600C6 21.200 3 20.600 .500 19.500z" fill="#f4cfa6"/></svg><div class="tl" style="left:581px">Cl...</div><div style="position:absolute;left:552px;top:38px;width:52px;height:2px;background:#76b9ed"></div><svg style="position:absolute;left:614.7px;top:11.5px" width="22" height="16.2" viewBox="0 0 22 16.2" ><path d="M0 2.500V14.700C0 15.500.700 16.200 1.500 16.200H5V6.500z" fill="#4285f4"/><path d="M17 16.200H20.500C21.300 16.200 22 15.500 22 14.700V2.500L17 6.500z" fill="#34a853"/><path d="M17 1L11 5.800L5 1V6.500L11 11.300L17 6.500z" fill="#ea4335"/><path d="M0 2.500C0 .500 2.300-.600 3.900.600L5 1.500V6.500L0 2.700z" fill="#c5221f"/><path d="M22 2.500C22 .500 19.700-.600 18.100.600L17 1.500V6.500L22 2.700z" fill="#fbbc04"/></svg><div class="tl" style="left:642.5px">G...</div><div style="position:absolute;left:613px;top:38px;width:52px;height:2px;background:#76b9ed"></div><svg style="position:absolute;left:676.7px;top:7.7000000000000455px" width="24.6" height="24.6" viewBox="0 0 24.6 24.6" ><circle cx="12.300" cy="12.300" r="12.300" fill="#fbc116"/><path d="M12.300 12.300L1.650 6.150A12.300 12.300 0 0 1 22.950 6.150z" fill="#e33b2e"/><path d="M12.300 12.300L1.650 6.150A12.300 12.300 0 0 0 12.300 24.600z" fill="#2da94f"/><path d="M12.300 12.300L22.950 6.150H12.300z" fill="#e33b2e"/><path d="M12.300 6.150H22.950A12.300 12.300 0 0 1 12.300 24.600L17.600 15.400z" fill="#fbc116"/><path d="M1.650 6.150L7 15.400L12.300 24.600A12.300 12.300 0 0 1 1.650 6.150z" fill="#2da94f"/><circle cx="12.300" cy="12.300" r="6.150" fill="#fff"/><circle cx="12.300" cy="12.300" r="4.800" fill="#3f82f0"/></svg><svg style="position:absolute;left:713.7px;top:9.5px" width="23" height="20" viewBox="0 0 23 20" ><rect x=".5" y=".5" width="22" height="18.500" fill="#050505" stroke="#8f8f8f"/><rect x="1" y="1" width="21" height="1.800" fill="#c4c4c4"/><text x="2.300" y="10.500" font-family="Liberation Mono,monospace" font-size="6.500" font-weight="700" fill="#e4e4e4" textLength="9.500" lengthAdjust="spacingAndGlyphs">C:\</text><rect x="12.500" y="9.600" width="6.500" height="1.100" fill="#f0f0f0"/></svg><div class="tl" style="left:742px">A...</div><div style="position:absolute;left:713px;top:38px;width:53px;height:2px;background:#76b9ed"></div><svg style="position:absolute;left:774.7px;top:9.5px" width="23" height="20" viewBox="0 0 23 20" ><rect x=".5" y=".5" width="22" height="18.500" fill="#050505" stroke="#8f8f8f"/><rect x="1" y="1" width="21" height="1.800" fill="#c4c4c4"/><text x="2.300" y="10.500" font-family="Liberation Mono,monospace" font-size="6.500" font-weight="700" fill="#e4e4e4" textLength="9.500" lengthAdjust="spacingAndGlyphs">C:\</text><rect x="12.500" y="9.600" width="6.500" height="1.100" fill="#f0f0f0"/></svg><div class="tl" style="left:803px">A...</div><div style="position:absolute;left:774px;top:38px;width:52px;height:2px;background:#76b9ed"></div><svg style="position:absolute;left:836px;top:13px" width="23" height="17.5" viewBox="0 0 23 17.5" ><path d="M0 1.200L4.800 .5V5.200H0zM5.600 .4L11 0V5.200H5.600zM0 6H4.800V10.500L0 9.800zM5.600 6H11V11.200L5.600 10.600z" fill="#19b5ee"/><path d="M2 12L8 9.500L22.500 11V15L14 17.500L2 15.500z" fill="#e8eaec"/><path d="M2 12L14 14V17.500L2 15.500z" fill="#c9ccd0"/><path d="M14 14L22.500 11V15L14 17.500z" fill="#a9adb3"/></svg><div class="tl" style="left:864px">Di...</div><div style="position:absolute;left:835px;top:38px;width:52px;height:2px;background:#76b9ed"></div><svg style="position:absolute;left:898.5px;top:12.200000000000045px" width="20.5" height="15" viewBox="0 0 42 31" ><rect x="0" y="0" width="42" height="31" fill="#f0f0f0"/><rect x="0" y="0" width="42" height="2.500" fill="#bdbdbd"/><rect x="0.400" y="0.400" width="41.200" height="30.200" fill="none" stroke="#c8c8c8" stroke-width=".8"/><rect x="10" y="6" width="17" height="21" fill="#0f7ae0"/><rect x="29.500" y="7" width="9" height="1.200" fill="#8e8e8e"/><rect x="29.500" y="10" width="9" height="1.200" fill="#8e8e8e"/><rect x="29.500" y="13" width="9" height="1.200" fill="#8e8e8e"/><rect x="29.500" y="16" width="9" height="1.200" fill="#8e8e8e"/><rect x="29.500" y="19" width="9" height="1.200" fill="#8e8e8e"/><rect x="29.500" y="22" width="6" height="1.200" fill="#8e8e8e"/><rect x="2.500" y="7.0" width="5.500" height="1.200" fill="#a8a8a8"/><rect x="2.500" y="10.3" width="5.500" height="1.200" fill="#a8a8a8"/><rect x="2.500" y="13.6" width="5.500" height="1.200" fill="#a8a8a8"/><rect x="2.500" y="16.9" width="5.500" height="1.200" fill="#a8a8a8"/><rect x="2.500" y="20.2" width="5.500" height="1.200" fill="#a8a8a8"/></svg><div class="tl" style="left:925px">test</div><div style="position:absolute;left:896px;top:38px;width:53px;height:2px;background:#76b9ed"></div><svg style="position:absolute;left:959.5px;top:12.200000000000045px" width="20.5" height="15" viewBox="0 0 42 31" ><rect x="0" y="0" width="42" height="31" fill="#f0f0f0"/><rect x="0" y="0" width="42" height="2.500" fill="#bdbdbd"/><rect x="0.400" y="0.400" width="41.200" height="30.200" fill="none" stroke="#c8c8c8" stroke-width=".8"/><rect x="10" y="6" width="17" height="21" fill="#0f7ae0"/><rect x="29.500" y="7" width="9" height="1.200" fill="#8e8e8e"/><rect x="29.500" y="10" width="9" height="1.200" fill="#8e8e8e"/><rect x="29.500" y="13" width="9" height="1.200" fill="#8e8e8e"/><rect x="29.500" y="16" width="9" height="1.200" fill="#8e8e8e"/><rect x="29.500" y="19" width="9" height="1.200" fill="#8e8e8e"/><rect x="29.500" y="22" width="6" height="1.200" fill="#8e8e8e"/><rect x="2.500" y="7.0" width="5.500" height="1.200" fill="#a8a8a8"/><rect x="2.500" y="10.3" width="5.500" height="1.200" fill="#a8a8a8"/><rect x="2.500" y="13.6" width="5.500" height="1.200" fill="#a8a8a8"/><rect x="2.500" y="16.9" width="5.500" height="1.200" fill="#a8a8a8"/><rect x="2.500" y="20.2" width="5.500" height="1.200" fill="#a8a8a8"/></svg><div class="tl" style="left:986px">test</div><div style="position:absolute;left:957px;top:38px;width:53px;height:2px;background:#76b9ed"></div><svg style="position:absolute;left:1020.5px;top:12.200000000000045px" width="20.5" height="15" viewBox="0 0 42 31" ><rect x="0" y="0" width="42" height="31" fill="#f0f0f0"/><rect x="0" y="0" width="42" height="2.500" fill="#bdbdbd"/><rect x="0.400" y="0.400" width="41.200" height="30.200" fill="none" stroke="#c8c8c8" stroke-width=".8"/><rect x="10" y="6" width="17" height="21" fill="#0f7ae0"/><rect x="29.500" y="7" width="9" height="1.200" fill="#8e8e8e"/><rect x="29.500" y="10" width="9" height="1.200" fill="#8e8e8e"/><rect x="29.500" y="13" width="9" height="1.200" fill="#8e8e8e"/><rect x="29.500" y="16" width="9" height="1.200" fill="#8e8e8e"/><rect x="29.500" y="19" width="9" height="1.200" fill="#8e8e8e"/><rect x="29.500" y="22" width="6" height="1.200" fill="#8e8e8e"/><rect x="2.500" y="7.0" width="5.500" height="1.200" fill="#a8a8a8"/><rect x="2.500" y="10.3" width="5.500" height="1.200" fill="#a8a8a8"/><rect x="2.500" y="13.6" width="5.500" height="1.200" fill="#a8a8a8"/><rect x="2.500" y="16.9" width="5.500" height="1.200" fill="#a8a8a8"/><rect x="2.500" y="20.2" width="5.500" height="1.200" fill="#a8a8a8"/></svg><div class="tl" style="left:1047px">test</div><div style="position:absolute;left:1018px;top:38px;width:53px;height:2px;background:#76b9ed"></div><svg style="position:absolute;left:1081.5px;top:12.200000000000045px" width="20.5" height="15" viewBox="0 0 42 31" ><rect x="0" y="0" width="42" height="31" fill="#f0f0f0"/><rect x="0" y="0" width="42" height="2.500" fill="#bdbdbd"/><rect x="0.400" y="0.400" width="41.200" height="30.200" fill="none" stroke="#c8c8c8" stroke-width=".8"/><rect x="10" y="6" width="17" height="21" fill="#0f7ae0"/><rect x="29.500" y="7" width="9" height="1.200" fill="#8e8e8e"/><rect x="29.500" y="10" width="9" height="1.200" fill="#8e8e8e"/><rect x="29.500" y="13" width="9" height="1.200" fill="#8e8e8e"/><rect x="29.500" y="16" width="9" height="1.200" fill="#8e8e8e"/><rect x="29.500" y="19" width="9" height="1.200" fill="#8e8e8e"/><rect x="29.500" y="22" width="6" height="1.200" fill="#8e8e8e"/><rect x="2.500" y="7.0" width="5.500" height="1.200" fill="#a8a8a8"/><rect x="2.500" y="10.3" width="5.500" height="1.200" fill="#a8a8a8"/><rect x="2.500" y="13.6" width="5.500" height="1.200" fill="#a8a8a8"/><rect x="2.500" y="16.9" width="5.500" height="1.200" fill="#a8a8a8"/><rect x="2.500" y="20.2" width="5.500" height="1.200" fill="#a8a8a8"/></svg><div class="tl" style="left:1108px">test</div><div style="position:absolute;left:1079px;top:38px;width:52px;height:2px;background:#76b9ed"></div><svg style="position:absolute;left:1143px;top:16px" width="13" height="8" viewBox="0 0 13 8" ><path d="M.700 7L6.500 1.200L12.300 7" fill="none" stroke="#fff" stroke-width="1.300"/></svg><svg style="position:absolute;left:1167px;top:13px" width="12" height="13" viewBox="0 0 12 13" ><rect x=".500" y=".500" width="11" height="12" fill="#3a3a3a" stroke="#f0f0f0"/><rect x="2.0" y="2" width="1.100" height="1" fill="#9a9a9a"/><rect x="2.0" y="4" width="1.100" height="1" fill="#9a9a9a"/><rect x="2.0" y="6" width="1.100" height="1" fill="#9a9a9a"/><rect x="2.0" y="8" width="1.100" height="1" fill="#9a9a9a"/><rect x="2.0" y="10" width="1.100" height="1" fill="#9a9a9a"/><rect x="4.2" y="2" width="1.100" height="1" fill="#9a9a9a"/><rect x="4.2" y="4" width="1.100" height="1" fill="#9a9a9a"/><rect x="4.2" y="6" width="1.100" height="1" fill="#9a9a9a"/><rect x="4.2" y="8" width="1.100" height="1" fill="#9a9a9a"/><rect x="4.2" y="10" width="1.100" height="1" fill="#9a9a9a"/><rect x="6.4" y="2" width="1.100" height="1" fill="#9a9a9a"/><rect x="6.4" y="4" width="1.100" height="1" fill="#9a9a9a"/><rect x="6.4" y="6" width="1.100" height="1" fill="#9a9a9a"/><rect x="6.4" y="8" width="1.100" height="1" fill="#9a9a9a"/><rect x="6.4" y="10" width="1.100" height="1" fill="#9a9a9a"/><rect x="8.600000000000001" y="2" width="1.100" height="1" fill="#9a9a9a"/><rect x="8.600000000000001" y="4" width="1.100" height="1" fill="#9a9a9a"/><rect x="8.600000000000001" y="6" width="1.100" height="1" fill="#9a9a9a"/><rect x="8.600000000000001" y="8" width="1.100" height="1" fill="#9a9a9a"/><rect x="8.600000000000001" y="10" width="1.100" height="1" fill="#9a9a9a"/></svg><svg style="position:absolute;left:1189px;top:12.299999999999955px" width="16" height="16" viewBox="0 0 16 16" ><circle cx="10" cy="6" r="4.500" fill="none" stroke="#f78a1d" stroke-width="2.200"/><path d="M6.600 9.400L1.800 14.200" stroke="#f78a1d" stroke-width="2.500" stroke-linecap="round"/></svg><div style="position:absolute;left:1210px;top:0;width:22px;height:39px;background:#3b3b3b"></div><svg style="position:absolute;left:1216px;top:11.5px" width="14" height="12" viewBox="0 0 14 12" ><path d="M13.500 .300C8 1.500 3.500 5 .800 11.800C6.500 11 12.500 7.500 13.500 .300z" fill="#9b66d0"/><path d="M12.500 1.500C8 4 4 7.500 1.500 11" stroke="#dcc0f6" stroke-width="1" fill="none"/></svg><svg style="position:absolute;left:1212.5px;top:15.200000000000045px" width="13" height="19" viewBox="0 0 13 19" ><path d="M1 1V15.200L4.400 12L6.900 17.800L9.300 16.800L6.800 11.200H11.400z" fill="#fff" stroke="#000" stroke-width="1"/></svg><svg style="position:absolute;left:1240px;top:14.5px" width="13.5" height="13.5" viewBox="0 0 13.5 13.5" ><g fill="none" stroke="#fff" stroke-width="1.300"><path d="M1 12.500A11.500 11.500 0 0 1 12.500 1"/><path d="M4.300 12.500A8.200 8.200 0 0 1 12.500 4.300"/><path d="M7.600 12.500A4.900 4.900 0 0 1 12.500 7.600"/></g><circle cx="11.300" cy="11.500" r="1.500" fill="#fff"/></svg><svg style="position:absolute;left:1261px;top:13px" width="17" height="14" viewBox="0 0 17 14" ><path d="M.600 4.800H3.200L7 1.300V12.700L3.200 9.200H.600z" fill="none" stroke="#fff" stroke-width="1.100"/><g fill="none" stroke="#fff" stroke-width="1.100"><path d="M9.200 4.800A3 3 0 0 1 9.200 9.200"/><path d="M11.300 2.800A5.800 5.800 0 0 1 11.300 11.200"/><path d="M13.500 1A8.500 8.500 0 0 1 13.500 13"/></g></svg><div class="tl" style="left:1288.5px;letter-spacing:-.9px">FRA</div><div class="ck" style="left:1312px;top:4px">18:09</div><div class="ck" style="left:1312px;top:22px;letter-spacing:-.2px">25/02/2025</div><svg style="position:absolute;left:1398.5px;top:12.299999999999955px" width="17.5" height="15.5" viewBox="0 0 17.5 15.5" ><path d="M.700 .700H16.800V11.500H11.200L8.700 14L6.200 11.500H.700z" fill="none" stroke="#fff" stroke-width="1.300"/></svg><div style="position:absolute;left:1435px;top:0;width:1px;height:39px;background:#6a6a6a"></div></div>
</body></html>
